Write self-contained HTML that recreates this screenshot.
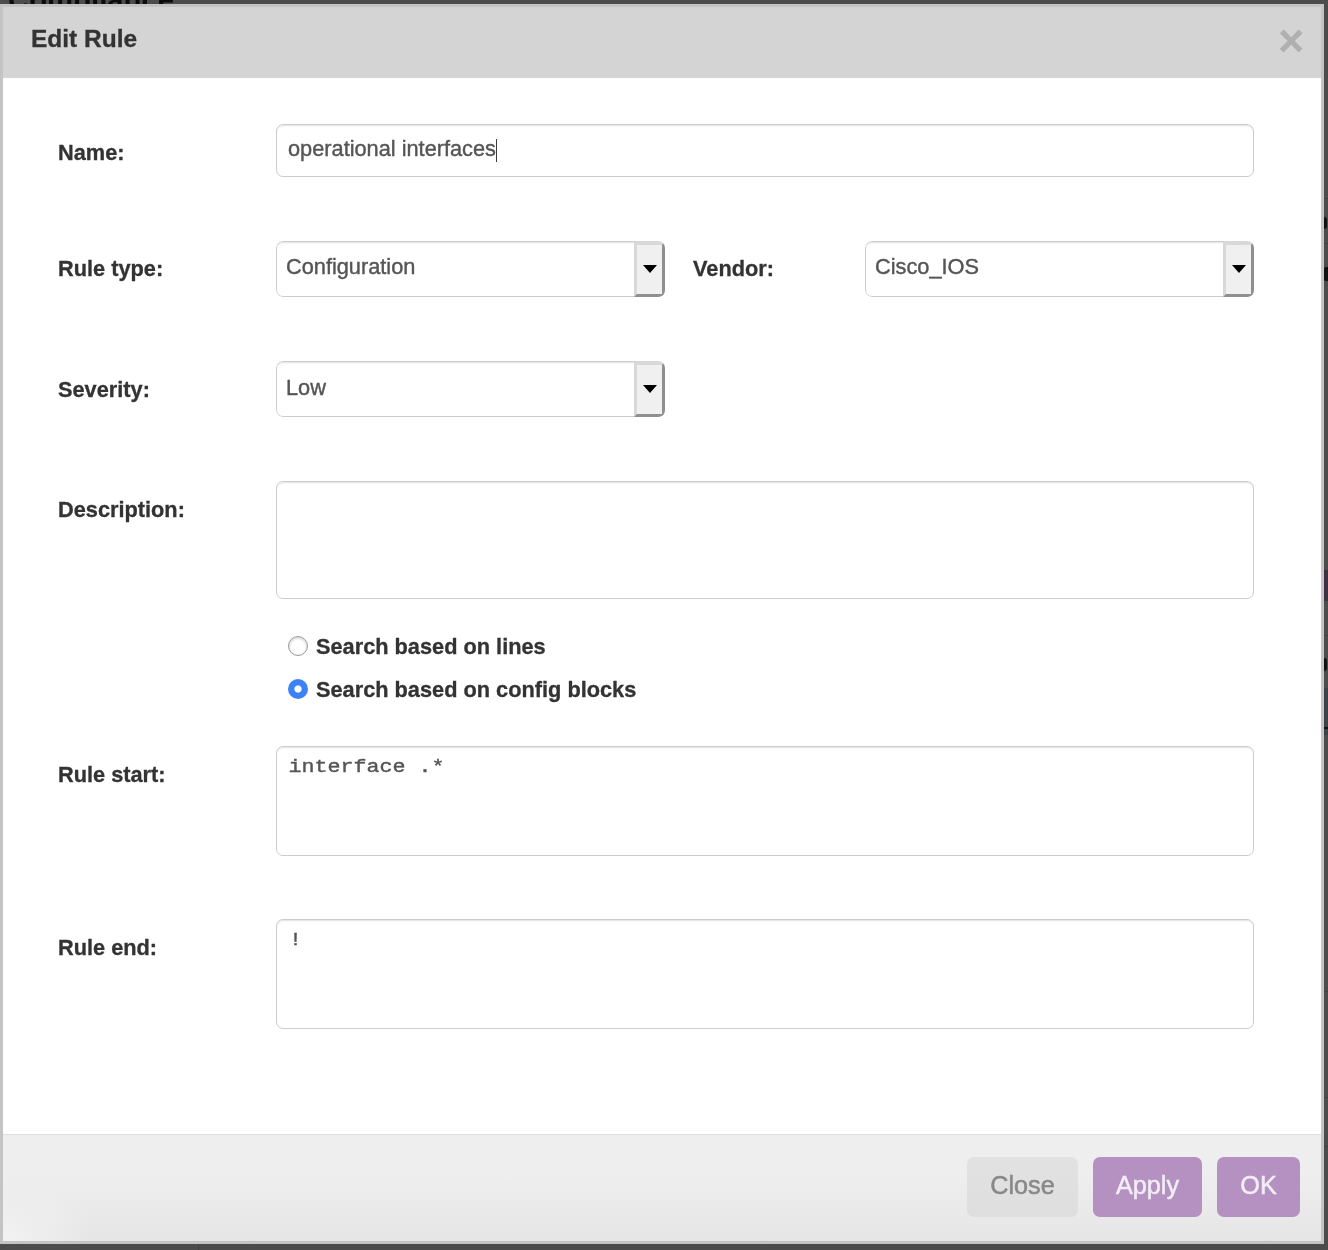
<!DOCTYPE html>
<html>
<head>
<meta charset="utf-8">
<title>Edit Rule</title>
<style>
*{box-sizing:border-box;margin:0;padding:0}
html,body{width:1328px;height:1250px;overflow:hidden}
body{background:#4c4c4c;font-family:"Liberation Sans",Helvetica,Arial,sans-serif;font-size:21.75px;color:#333;position:relative}
.bgtitle{will-change:transform;position:absolute;left:7.5px;top:-17px;font-size:29.3px;font-weight:bold;color:#0c0c0c;line-height:34px;white-space:nowrap}
.strip{position:absolute;left:1324px;top:0;width:4px;height:1250px}
.strip i{position:absolute;left:0;width:4px;display:block}
.modal{will-change:transform;position:absolute;left:0;top:4px;width:1324px;height:1240px;background:#fff;border:3px solid #c4c4c4}
.hdr{position:absolute;left:0;top:0;width:1318px;height:71px;background:#d4d4d4}
.hdr h3{position:absolute;left:28px;top:9px;font-size:24.5px;line-height:45px;font-weight:bold;color:#333;-webkit-text-stroke:0.3px #333}
.close{position:absolute;left:1273px;top:11px;font-size:44px;line-height:45px;font-weight:bold;color:#b0b0b0;-webkit-text-stroke:0.6px #b0b0b0;text-shadow:0 1px 0 #e6e6e6;width:30px;text-align:center}
.lbl{position:absolute;left:55px;font-weight:bold;color:#333;-webkit-text-stroke:0.3px #333;line-height:30px;white-space:nowrap}
.fld{position:absolute;background:#fff;border:1px solid #ccc;border-radius:7px;box-shadow:inset 0 2px 2px -1px rgba(0,0,0,.12);color:#555;overflow:hidden;white-space:nowrap}
.fld span.t{position:absolute;left:9px;line-height:30px;-webkit-text-stroke:0.4px #555}
.sel{border:none;box-shadow:none}
.sel:before{content:"";position:absolute;left:0;top:0;right:0;bottom:0;border:1px solid #ccc;border-radius:7px;box-shadow:inset 0 2px 2px -1px rgba(0,0,0,.12)}
.sel span.t{left:10px}
.sel .btn3{position:absolute;left:358px;top:0;width:30.5px;height:55.5px;background:#f0f0f0;border-style:solid;border-width:4px 3.5px 3.5px 3px;border-color:#d8d8d8 #8f8f8f #8f8f8f #d8d8d8}
.sel .btn3:after{content:"";position:absolute;left:5.5px;top:19.7px;border-left:7px solid transparent;border-right:7px solid transparent;border-top:8.3px solid #000}
.mono{font-family:"Liberation Mono",monospace;font-size:21.67px}
.mono span.t{-webkit-text-stroke:0.45px #555;transform:scaleY(.88);transform-origin:0 22px}
.radio{position:absolute;width:20px;height:20px;border-radius:50%}
.r1{border:1px solid #9a9a9a;background:#fff;box-shadow:inset 0 1px 3px rgba(0,0,0,.22)}
.r2{background:radial-gradient(circle at 50% 50%,#fff 0,#fff 3.1px,#3b82f7 4.1px,#3b82f7 100%)}
.ftr{position:absolute;left:0;top:1127px;width:1318px;height:107px;background:radial-gradient(ellipse 90px 70px at 0 100%,rgba(242,242,242,1) 0,rgba(242,242,242,0) 100%),linear-gradient(to bottom,#eeeeee 0,#eeeeee 35%,#e6e6e6 100%);border-top:1px solid #dfdfdf}
.b{position:absolute;top:22px;height:60px;border-radius:7px;font-size:25.2px;line-height:56px;text-align:center;-webkit-text-stroke:0.5px}
.bclose{left:964px;width:111px;background:linear-gradient(#e2e2e2,#dedede);color:#888}
.bapply{left:1090px;width:109px;background:#b491c0;color:#f3edf5}
.bok{left:1214px;width:83px;background:#b491c0;color:#f3edf5}
</style>
</head>
<body>
<div class="bgtitle">Compliance</div>
<div class="strip">
  <i style="top:198px;height:1px;background:#404040"></i>
  <i style="top:217px;height:12px;background:#111;border-radius:0 3px 3px 0;width:3px"></i>
  <i style="top:243px;height:1px;background:#404040"></i>
  <i style="top:267px;height:14px;background:#111;border-radius:2px 0 0 2px"></i>
  <i style="top:570px;height:31px;background:#3e3142"></i>
  <i style="top:635px;height:1px;background:#404040"></i>
  <i style="top:658px;height:13px;background:#111;border-radius:0 3px 3px 0;width:3px"></i>
  <i style="top:688px;height:47px;background:#3c4448"></i>
  <i style="top:727px;height:2px;background:#111"></i>
  <i style="top:991px;height:1px;background:#404040"></i>
  <i style="top:1097px;height:1px;background:#404040"></i>
  <i style="top:1146px;height:1px;background:#404040"></i>
  <i style="left:-1126px;top:1244px;width:1px;height:6px;background:#404040"></i>
</div>
<div class="modal">
  <div class="hdr"><h3>Edit Rule</h3><div class="close">×</div></div>

  <div class="lbl" style="top:131px">Name:</div>
  <div class="fld" style="left:273px;top:117px;width:978px;height:53px"><span class="t" style="left:11px;top:9px">operational interfaces</span><i style="position:absolute;left:219px;top:14px;width:1px;height:23px;background:#3a3a3a"></i></div>

  <div class="lbl" style="top:247px">Rule type:</div>
  <div class="fld sel" style="left:273px;top:234px;width:388.5px;height:55.5px"><span class="t" style="top:11px">Configuration</span><div class="btn3"></div></div>
  <div class="lbl" style="left:690px;top:247px">Vendor:</div>
  <div class="fld sel" style="left:862px;top:234px;width:388.5px;height:55.5px"><span class="t" style="top:11px">Cisco_IOS</span><div class="btn3"></div></div>

  <div class="lbl" style="top:368px">Severity:</div>
  <div class="fld sel" style="left:273px;top:354px;width:388.5px;height:55.5px"><span class="t" style="top:12px">Low</span><div class="btn3"></div></div>

  <div class="lbl" style="top:488px">Description:</div>
  <div class="fld" style="left:273px;top:474px;width:978px;height:118px"></div>

  <div class="radio r1" style="left:285px;top:629px"></div>
  <div class="lbl" style="left:313px;top:625px">Search based on lines</div>
  <div class="radio r2" style="left:285px;top:672px"></div>
  <div class="lbl" style="left:313px;top:668px">Search based on config blocks</div>

  <div class="lbl" style="top:753px">Rule start:</div>
  <div class="fld mono" style="left:273px;top:739px;width:978px;height:110px"><span class="t" style="left:11.5px;top:5px">interface .*</span></div>

  <div class="lbl" style="top:926px">Rule end:</div>
  <div class="fld mono" style="left:273px;top:912px;width:978px;height:110px"><span class="t" style="left:12px;top:5px">!</span></div>

  <div class="ftr">
    <div class="b bclose">Close</div>
    <div class="b bapply">Apply</div>
    <div class="b bok">OK</div>
  </div>
</div>
</body>
</html>
